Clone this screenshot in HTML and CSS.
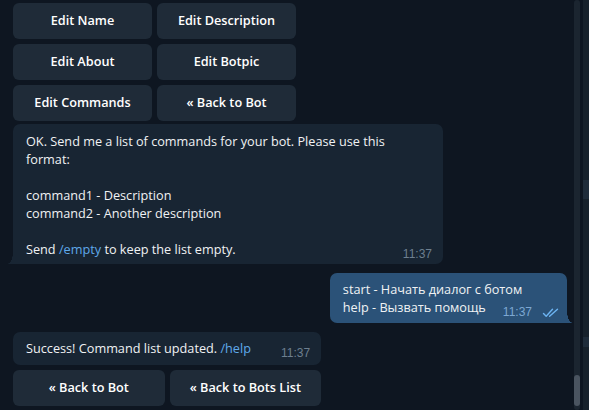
FILE: index.html
```html
<!DOCTYPE html>
<html>
<head>
<meta charset="utf-8">
<link rel="stylesheet" href="styles.css">
</head>
<body>
<div class="page">
  <div class="chat">
    <div class="kb kb-top">
      <div class="btn">Edit Name</div>
      <div class="btn">Edit Description</div>
      <div class="btn">Edit About</div>
      <div class="btn">Edit Botpic</div>
      <div class="btn">Edit Commands</div>
      <div class="btn">« Back to Bot</div>
    </div>

    <div class="bubble in tail b1">
      <div class="text">OK. Send me a list of commands for your bot. Please use this format:<br><br>command1 - Description<br>command2 - Another description<br><br></div>
      <div class="last">
        <span>Send <span class="link">/empty</span> to keep the list empty.</span>
        <span class="meta">11:37</span>
      </div>
    </div>

    <div class="bubble out tail b2">
      <div class="text">start - Начать диалог с ботом</div>
      <div class="last">
        <span>help - Вызвать помощь</span>
        <span class="meta out-meta">11:37
          <svg class="checks" width="17" height="10" viewBox="0 0 17 10" fill="none" stroke="#6cb4f2" stroke-width="1.4" stroke-linecap="round" stroke-linejoin="round">
            <path d="M1.5 5.5 L4.2 8.3 L10.5 1.2"/>
            <path d="M7.6 8.3 L15.5 1.2"/>
          </svg>
        </span>
      </div>
    </div>

    <div class="group">
      <div class="bubble in b3">
        <div class="last">
          <span>Success! Command list updated. <span class="link">/help</span></span>
          <span class="meta wide">11:37</span>
        </div>
      </div>
      <div class="kb kb-bottom">
        <div class="btn">« Back to Bot</div>
        <div class="btn">« Back to Bots List</div>
      </div>
    </div>
  </div>
  <div class="scrollbar"><div class="thumb"></div></div>
  <div class="side">
    <div class="side-mark m1"></div>
    <div class="side-mark m2"></div>
  </div>
</div>
</body>
</html>
```

FILE: styles.css
```css
html, body {
  margin: 0;
  padding: 0;
  background: #0e1621;
  height: 100%;
  overflow: hidden;
}

.page {
  display: flex;
  height: 410px;
  width: 589px;
  font-family: "Open Sans", "Noto Sans", sans-serif;
  font-size: 12.7px;
  color: #f0f2f4;
}

.chat {
  width: 554px;
  padding: 3px 7px 0 13px;
  display: flex;
  flex-direction: column;
  align-items: flex-start;
}

.kb {
  display: grid;
  grid-template-columns: 1fr 1fr;
  grid-auto-rows: 36px;
  gap: 5px;
}

.kb-top {
  grid-template-columns: 139px 139px;
}

.btn {
  background: #1f2b38;
  border-radius: 6px;
  display: flex;
  align-items: center;
  justify-content: center;
  font-weight: 600;
  color: #ffffff;
  font-size: 12.7px;
  padding-bottom: 2px;
  box-sizing: border-box;
}

.bubble {
  position: relative;
  border-radius: 7px;
  line-height: 18px;
}

.bubble.in {
  background: #182533;
}

.bubble.out {
  background: #2b5278;
  align-self: flex-end;
}

.bubble.tail.in {
  border-bottom-left-radius: 0;
}

.bubble.tail.out {
  border-bottom-right-radius: 0;
}

.bubble.tail.in::before {
  content: "";
  position: absolute;
  left: -6px;
  bottom: 0;
  width: 6px;
  height: 12px;
  background: radial-gradient(ellipse 6px 12px at 0 0, transparent 98%, #182533 100%);
}

.bubble.tail.out::after {
  content: "";
  position: absolute;
  right: -6px;
  bottom: 0;
  width: 6px;
  height: 12px;
  background: radial-gradient(ellipse 6px 12px at 100% 0, transparent 98%, #2b5278 100%);
}

.b1 {
  margin-top: 3px;
  max-width: 430px;
  box-sizing: border-box;
  padding: 8px 11px 6px 13px;
}

.b1 .text {
  padding-right: 30px;
}

.b2 {
  margin-top: 9px;
  padding: 7px 8px 7px 13px;
}

.group {
  margin-top: 9px;
  display: flex;
  flex-direction: column;
  gap: 5px;
}

.b3 {
  padding: 7px 11px 8px 13px;
}

.last {
  display: flex;
  justify-content: space-between;
  align-items: flex-end;
}

.meta {
  font-family: "Liberation Sans", Arial, sans-serif;
  font-size: 12px;
  line-height: 12px;
  color: #6d7f8f;
  margin-bottom: -2px;
  margin-left: 13px;
  display: flex;
  align-items: flex-end;
  white-space: nowrap;
}

.meta.wide {
  margin-left: 30px;
}

.meta.out-meta {
  color: #7da8d3;
  margin-left: 17px;
}

.checks {
  margin-left: 10px;
  margin-bottom: 0;
}

.link {
  color: #5fa9ea;
}

.kb-bottom {
  grid-auto-rows: 36px;
}

.scrollbar {
  width: 6px;
  height: 410px;
  background: #1b2530;
  border-radius: 3px;
  display: flex;
  flex-direction: column;
  justify-content: flex-end;
  padding-bottom: 4px;
  box-sizing: border-box;
}

.thumb {
  height: 31px;
  background: #4a5460;
  border-radius: 3px;
}

.side {
  margin-left: 3px;
  width: 6px;
  height: 410px;
  background: #17212b;
  display: flex;
  flex-direction: column;
}

.side-mark {
  background: #1f2c3a;
}

.m1 {
  margin-top: 180px;
  height: 19px;
}

.m2 {
  margin-top: 138px;
  height: 10px;
}
```
